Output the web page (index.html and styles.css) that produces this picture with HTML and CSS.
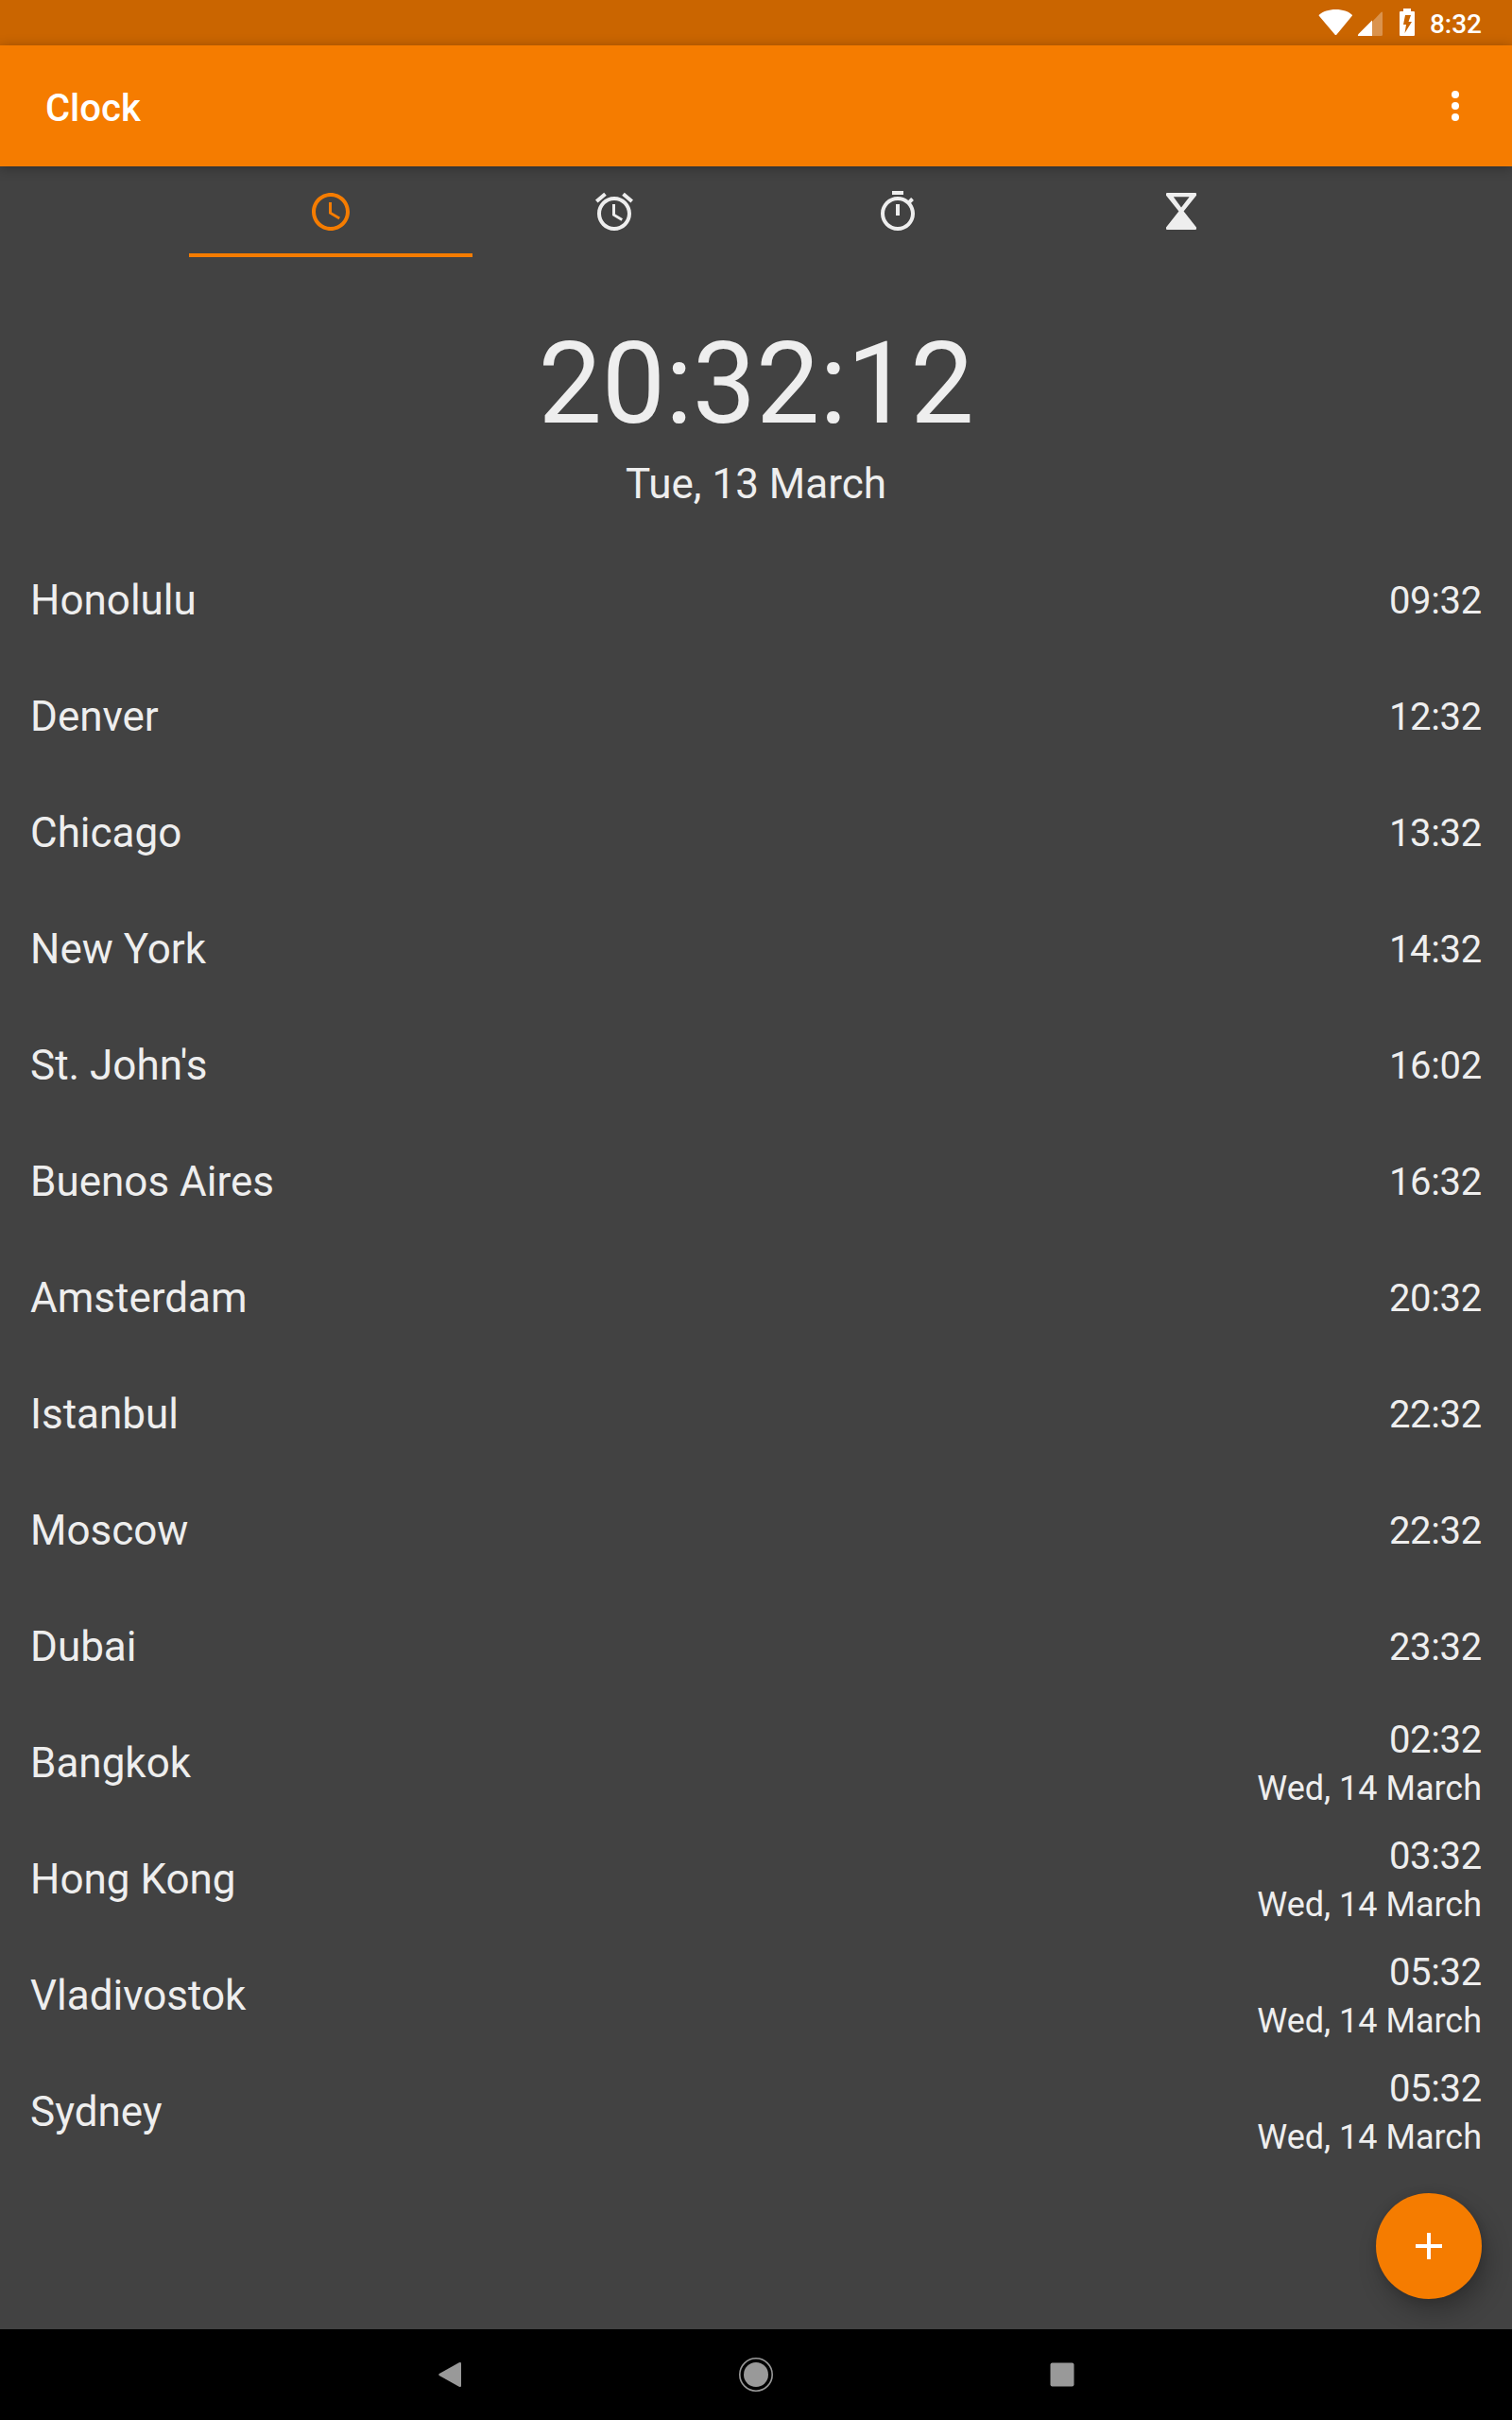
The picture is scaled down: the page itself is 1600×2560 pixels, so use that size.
FILE: index.html
```html
<!DOCTYPE html>
<html lang="en">
<head>
<meta charset="utf-8">
<title>Clock</title>
<link rel="stylesheet" href="styles.css">
</head>
<body>
<div class="screen">
  <div class="status-bar">
    <svg class="status-icons" width="104" height="48" viewBox="0 0 104 48" fill="#fff">
      <path d="M.8 15.700C5 12.200 11 10 18.500 10s13.500 2.200 17.300 5.700c.3.3.3.7 0 1L19.500 36.400c-.6.7-1.400.7-2 0L.8 16.700c-.3-.3-.3-.7 0-1z"/>
      <path d="M68 14v22.500q0 1.500-1.500 1.500H57V23L66 13.500q2-2 2 .5z" opacity=".3"/>
      <path d="M57 21.500V38H43q-2 0-.5-2z"/>
      <path fill-rule="evenodd" d="M90 9h8v3h3q1 0 1 1v24q0 1-1 1H87q-1 0-1-1V13q0-1 1-1h3zM92 16l-2 10h3l-1.500 9L99 23h-3.500l2.500-7z"/>
    </svg>
    <span class="status-time">8:32</span>
  </div>
  <header class="toolbar">
    <h1 class="title">Clock</h1>
    <svg class="overflow" width="48" height="48" viewBox="0 0 24 24" fill="#fff"><circle cx="12" cy="6" r="2"/><circle cx="12" cy="12" r="2"/><circle cx="12" cy="18" r="2"/></svg>
  </header>
  <nav class="tabs">
    <div class="tab tab-active"><svg width="48" height="48" viewBox="0 0 24 24"><path d="M11.990 2C6.470 2 2 6.480 2 12s4.470 10 9.990 10C17.520 22 22 17.520 22 12S17.520 2 11.990 2zM12 20c-4.420 0-8-3.580-8-8s3.580-8 8-8 8 3.580 8 8-3.580 8-8 8zm.5-13H11v6l5.250 3.150.75-1.230-4.500-2.670z"/></svg></div>
    <div class="tab"><svg width="48" height="48" viewBox="0 0 24 24"><path d="M22 5.720l-4.600-3.860-1.290 1.530 4.600 3.860L22 5.720zM7.880 3.390L6.600 1.860 2 5.710l1.290 1.530 4.590-3.850zM12.500 8H11v6l4.750 2.850.75-1.230-4-2.370V8zM12 4c-4.970 0-9 4.030-9 9s4.020 9 9 9c4.970 0 9-4.030 9-9s-4.030-9-9-9zm0 16c-3.870 0-7-3.130-7-7s3.130-7 7-7 7 3.130 7 7-3.130 7-7 7z"/></svg></div>
    <div class="tab"><svg width="48" height="48" viewBox="0 0 24 24"><path d="M15 1H9v2h6V1zm-4 13h2V8h-2v6zm8.030-6.610l1.420-1.420c-.43-.51-.9-.99-1.410-1.410l-1.420 1.420C16.070 4.740 14.120 4 12 4c-4.970 0-9 4.030-9 9s4.020 9 9 9 9-4.030 9-9c0-2.120-.74-4.070-1.970-5.610zM12 20c-3.870 0-7-3.130-7-7s3.130-7 7-7 7 3.130 7 7-3.130 7-7 7z"/></svg></div>
    <div class="tab"><svg width="48" height="48" viewBox="0 0 24 24"><path fill-rule="evenodd" d="M4.500 2h15q.5 0 .5.500V3.400L13.300 11.800 20 20.200v.8q0 .5-.5.500h-15q-.5 0-.5-.5v-.8l6.700-8.400L4 3.400V2.500q0-.5.500-.5zM7.900 4.100L12 9.800l4.300-5.700z"/></svg></div>
  </nav>
  <main class="content">
    <section class="now">
      <div class="now-time">20:32:12</div>
      <div class="now-date">Tue, 13 March</div>
    </section>
    <ul class="cities">
      <li class="city"><span class="name">Honolulu</span><span class="time">09:32</span></li>
      <li class="city"><span class="name">Denver</span><span class="time">12:32</span></li>
      <li class="city"><span class="name">Chicago</span><span class="time">13:32</span></li>
      <li class="city"><span class="name">New York</span><span class="time">14:32</span></li>
      <li class="city"><span class="name">St. John's</span><span class="time">16:02</span></li>
      <li class="city"><span class="name">Buenos Aires</span><span class="time">16:32</span></li>
      <li class="city"><span class="name">Amsterdam</span><span class="time">20:32</span></li>
      <li class="city"><span class="name">Istanbul</span><span class="time">22:32</span></li>
      <li class="city"><span class="name">Moscow</span><span class="time">22:32</span></li>
      <li class="city"><span class="name">Dubai</span><span class="time">23:32</span></li>
      <li class="city"><span class="name">Bangkok</span><div class="when"><span class="time">02:32</span><span class="date">Wed, 14 March</span></div></li>
      <li class="city"><span class="name">Hong Kong</span><div class="when"><span class="time">03:32</span><span class="date">Wed, 14 March</span></div></li>
      <li class="city"><span class="name">Vladivostok</span><div class="when"><span class="time">05:32</span><span class="date">Wed, 14 March</span></div></li>
      <li class="city"><span class="name">Sydney</span><div class="when"><span class="time">05:32</span><span class="date">Wed, 14 March</span></div></li>
    </ul>
    <button class="fab" aria-label="Add city"><svg width="48" height="48" viewBox="0 0 24 24" fill="#fff"><path d="M19 13h-6v6h-2v-6H5v-2h6V5h2v6h6z"/></svg></button>
  </main>
  <footer class="nav-bar">
    <svg width="48" height="48" viewBox="0 0 48 48" fill="#999"><path d="M12.800 23q-1.400 1 0 2l21 11.700q2.200 1 2.200-1V12.300q0-2-2.200-1z"/></svg>
    <svg width="48" height="48" viewBox="0 0 48 48" fill="#999"><circle cx="24" cy="24" r="13"/><circle cx="24" cy="24" r="17.200" fill="none" stroke="#999" stroke-width="1.600"/></svg>
    <svg width="48" height="48" viewBox="0 0 48 48" fill="#999"><rect x="11.500" y="11.500" width="25" height="25" rx="2"/></svg>
  </footer>
</div>
</body>
</html>
```
FILE: styles.css
```css
* {
  box-sizing: border-box;
  margin: 0;
  padding: 0;
}

body {
  font-family: Roboto, "Noto Sans", sans-serif;
  color: #eee;
  background: #424242;
}

svg {
  display: block;
}

.screen {
  width: 1600px;
  height: 2560px;
  display: flex;
  flex-direction: column;
  overflow: hidden;
}

.status-bar {
  height: 48px;
  flex: none;
  display: flex;
  align-items: center;
  justify-content: flex-end;
  gap: 14px;
  padding-right: 32px;
  background: #ca6500;
  color: #fff;
}

.status-time {
  font-size: 28px;
  font-weight: 500;
  line-height: 34px;
  padding-top: 4px;
}

.toolbar {
  position: relative;
  z-index: 1;
  height: 128px;
  flex: none;
  display: flex;
  align-items: center;
  justify-content: space-between;
  padding: 0 36px 0 48px;
  background: #f57c00;
  box-shadow: 0 2px 12px rgba(0, 0, 0, .3);
}

.title {
  font-size: 40px;
  font-weight: 500;
  line-height: 48px;
  padding-top: 6px;
  color: #fff;
}

.tabs {
  height: 96px;
  flex: none;
  display: grid;
  grid-template-columns: repeat(4, 300px);
  padding-left: 200px;
}

.tab {
  display: flex;
  align-items: center;
  justify-content: center;
  fill: #eee;
}

.tab-active {
  fill: #f57c00;
  box-shadow: inset 0 -4px #f57c00;
}

.content {
  position: relative;
  flex: 1;
  padding-top: 64px;
}

.now {
  height: 238px;
  text-align: center;
}

.now-time {
  font-size: 120px;
  line-height: 140px;
  letter-spacing: -.25px;
}

.now-date {
  font-size: 44px;
  line-height: 52px;
  margin-top: 10px;
}

.cities {
  list-style: none;
}

.city {
  height: 123px;
  display: flex;
  align-items: center;
  justify-content: space-between;
  padding: 0 32px;
}

.name {
  font-size: 44px;
  line-height: 52px;
  padding-bottom: 2px;
}

.when {
  display: flex;
  flex-direction: column;
  align-items: flex-end;
}

.time {
  font-size: 40px;
  line-height: 54px;
  letter-spacing: -.3px;
}

.date {
  font-size: 36px;
  line-height: 49px;
}

.fab {
  position: absolute;
  right: 32px;
  bottom: 32px;
  width: 112px;
  height: 112px;
  display: flex;
  align-items: center;
  justify-content: center;
  border: 0;
  border-radius: 50%;
  background: #f57c00;
  box-shadow: 6px 14px 24px rgba(0, 0, 0, .25), 0 0 8px rgba(0, 0, 0, .12);
}

.nav-bar {
  position: relative;
  height: 96px;
  flex: none;
  display: flex;
  align-items: center;
  justify-content: center;
  gap: 276px;
  background: #000;
}
```
